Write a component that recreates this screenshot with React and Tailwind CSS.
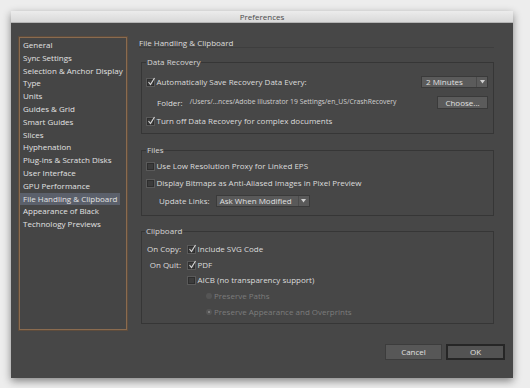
import React from "react";

const items = [
  "General",
  "Sync Settings",
  "Selection & Anchor Display",
  "Type",
  "Units",
  "Guides & Grid",
  "Smart Guides",
  "Slices",
  "Hyphenation",
  "Plug-ins & Scratch Disks",
  "User Interface",
  "GPU Performance",
  "File Handling & Clipboard",
  "Appearance of Black",
  "Technology Previews",
];

function Check({ checked }) {
  return (
    <span className="relative inline-block w-[7px] h-[7px] shrink-0 border border-[#2e2e2e] bg-[#3c3c3c] shadow-[0_0_0_1px_#5a5a5a] align-middle">
      {checked && (
        <svg className="absolute left-[-1px] top-[-3px]" width="9" height="9" viewBox="0 0 9 9">
          <path d="M1.5 5 L3.5 7.5 L7.5 1" stroke="#d8d8d8" strokeWidth="1.1" fill="none" />
        </svg>
      )}
    </span>
  );
}

function Radio({ filled }) {
  return (
    <span className="relative inline-flex items-center justify-center w-[6px] h-[6px] rounded-full bg-[#555] shrink-0 align-middle">
      {filled && <span className="w-[2px] h-[2px] rounded-full bg-[#8a8a8a]" />}
    </span>
  );
}

function Legend({ children }) {
  return (
    <legend className="px-[1px] -ml-[1px] leading-[10px] text-[8px] text-[#d6d6d6] whitespace-nowrap">{children}</legend>
  );
}

export default function App() {
  return (
    <div
      className="w-[530px] h-[388px] bg-[#ededed] pl-[11px] pt-[11px] overflow-hidden"
      style={{ fontFamily: '"Open Sans", "DejaVu Sans", sans-serif' }}
    >
      <div className="w-[502px] h-[367px] flex flex-col shadow-[0_3px_8px_rgba(0,0,0,0.45)]">
        <div className="h-[12px] bg-gradient-to-b from-[#ececec] to-[#d9d9d9] border-b border-[#b5b5b5] flex items-center justify-center text-[8px] leading-[12px] text-[#4a4a4a]">
          Preferences
        </div>
        <div className="flex-1 bg-[#474747] flex flex-col">
          <div className="flex pl-[8px] pt-[14px]">
            <div className="w-[108px] h-[293px] border border-[#8a6b4f] shadow-[0_0_0_1px_#5e4c3c] bg-[#454545] pt-[1px] pr-[6px]">
              {items.map((it) => (
                <div
                  key={it}
                  className={
                    "h-[12.8px] leading-[12.8px] pl-[3px] text-[8px] whitespace-nowrap text-[#e2e2e2] " +
                    (it === "File Handling & Clipboard" ? "bg-[#5b606b]" : "")
                  }
                >
                  {it}
                </div>
              ))}
            </div>
            <div className="ml-[12px] w-[355px] flex flex-col">
              <div className="h-[11px] leading-[11px] text-[8px] text-[#dcdcdc] border-b border-[#3e3e3e] whitespace-nowrap">
                File Handling &amp; Clipboard
              </div>
              {/* Data Recovery */}
              <fieldset className="ml-[2px] mt-[9px] h-[77px] border border-[#363636] pl-[5px] pr-[5px]">
                <Legend>Data Recovery</Legend>
                <div className="flex flex-col pt-[9px] text-[8px] text-[#dcdcdc] whitespace-nowrap">
                  <div className="h-[12px] flex items-center">
                    <Check checked />
                    <span className="ml-[2.5px]">Automatically Save Recovery Data Every:</span>
                    <div className="ml-auto w-[67px] h-[12px] bg-[#5b5b5b] border border-[#3a3a3a] flex items-center">
                      <span className="pl-[4px] flex-1 leading-[10px] text-[#e0e0e0]">2 Minutes</span>
                      <span className="w-[11px] h-full border-l border-[#4a4a4a] flex items-center justify-center">
                        <svg width="5" height="4" viewBox="0 0 5 4"><path d="M0 0 H5 L2.5 3.5 Z" fill="#d0d0d0" /></svg>
                      </span>
                    </div>
                  </div>
                  <div className="mt-[8px] h-[13px] flex items-center">
                    <span className="ml-[10px]">Folder:</span>
                    <span className="ml-[7px] text-[6.8px] text-[#d0d0d0]">/Users/...nces/Adobe Illustrator 19 Settings/en_US/CrashRecovery</span>
                    <div className="ml-auto w-[51px] h-[13px] bg-[#5b5b5b] border border-[#3a3a3a] flex items-center justify-center text-[#e0e0e0] leading-[10px]">
                      Choose...
                    </div>
                  </div>
                  <div className="mt-[6px] h-[12px] flex items-center">
                    <Check checked />
                    <span className="ml-[2.5px]">Turn off Data Recovery for complex documents</span>
                  </div>
                </div>
              </fieldset>
              {/* Files */}
              <fieldset className="ml-[2px] mt-[11px] h-[71px] border border-[#363636] pl-[5px] pr-[5px]">
                <Legend>Files</Legend>
                <div className="flex flex-col pt-[5px] text-[8px] text-[#dcdcdc] whitespace-nowrap">
                  <div className="h-[12px] flex items-center">
                    <Check />
                    <span className="ml-[2.5px]">Use Low Resolution Proxy for Linked EPS</span>
                  </div>
                  <div className="mt-[5px] h-[12px] flex items-center">
                    <Check />
                    <span className="ml-[2.5px]">Display Bitmaps as Anti-Aliased Images in Pixel Preview</span>
                  </div>
                  <div className="mt-[6px] h-[12px] flex items-center">
                    <span className="ml-[12px]">Update Links:</span>
                    <div className="ml-[6px] w-[94px] h-[12px] bg-[#595959] border border-[#3a3a3a] flex items-center">
                      <span className="pl-[3px] flex-1 leading-[10px] text-[#e0e0e0]">Ask When Modified</span>
                      <span className="w-[11px] h-full border-l border-[#4a4a4a] flex items-center justify-center">
                        <svg width="5" height="4" viewBox="0 0 5 4"><path d="M0 0 H5 L2.5 3.5 Z" fill="#d0d0d0" /></svg>
                      </span>
                    </div>
                  </div>
                </div>
              </fieldset>
              {/* Clipboard */}
              <fieldset className="ml-[2px] mt-[10px] h-[98px] border border-[#363636] pl-[4px] pr-[5px]">
                <Legend>Clipboard</Legend>
                <div className="flex flex-col pt-[7px] text-[8px] text-[#dcdcdc] whitespace-nowrap">
                  <div className="h-[12px] flex items-center">
                    <span className="w-[35px] text-right">On Copy:</span>
                    <span className="ml-[7px] flex"><Check checked /></span>
                    <span className="ml-[2.5px]">Include SVG Code</span>
                  </div>
                  <div className="mt-[4px] h-[12px] flex items-center">
                    <span className="w-[35px] text-right">On Quit:</span>
                    <span className="ml-[7px] flex"><Check checked /></span>
                    <span className="ml-[2.5px]">PDF</span>
                  </div>
                  <div className="mt-[3px] h-[12px] flex items-center">
                    <span className="ml-[42px] flex"><Check /></span>
                    <span className="ml-[2.5px]">AICB (no transparency support)</span>
                  </div>
                  <div className="mt-[4px] h-[12px] flex items-center text-[#7c7c7c]">
                    <span className="ml-[60px] flex"><Radio /></span>
                    <span className="ml-[2px]">Preserve Paths</span>
                  </div>
                  <div className="mt-[4px] h-[12px] flex items-center text-[#7c7c7c]">
                    <span className="ml-[60px] flex"><Radio filled /></span>
                    <span className="ml-[2px]">Preserve Appearance and Overprints</span>
                  </div>
                </div>
              </fieldset>
            </div>
          </div>
          <div className="flex justify-end pr-[8px] mt-[14px] gap-[4px] text-[8px] text-[#e0e0e0]">
            <div className="w-[57px] h-[16px] bg-[#575757] border border-[#3c3c3c] flex items-center justify-center">Cancel</div>
            <div className="w-[59px] h-[16px] bg-[#535353] border-2 border-[#262626] flex items-center justify-center">OK</div>
          </div>
        </div>
      </div>
    </div>
  );
}
